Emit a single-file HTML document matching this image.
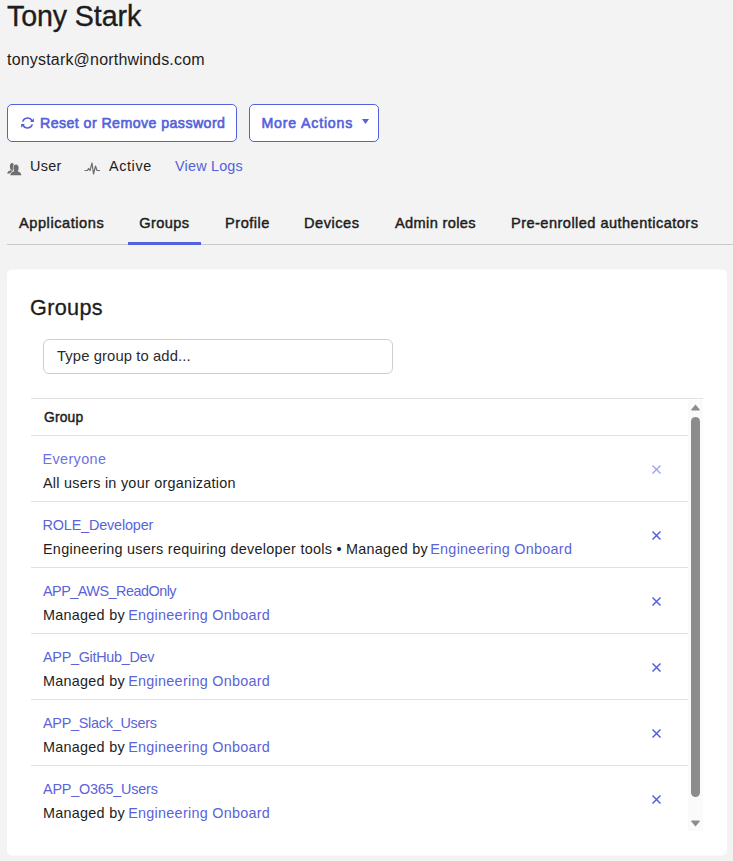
<!DOCTYPE html>
<html><head><meta charset="utf-8">
<style>
html,body{margin:0;padding:0}
body{width:733px;height:861px;overflow:hidden;background:#f3f3f3;position:relative;font-family:"Liberation Sans",sans-serif;color:#1d1d21}
.t{position:absolute;white-space:nowrap;line-height:20px}
.btn{position:absolute;box-sizing:border-box;border:1px solid #5361dc;border-radius:5px;background:#fff}
.pri{color:#5361dc}
.scroll .pri{color:#5a63d9}
.bold{font-weight:normal;-webkit-text-stroke:0.45px currentColor}
.btnt{-webkit-text-stroke:0.6px currentColor}
.tab{font-weight:normal;-webkit-text-stroke:0.45px #1d1d21;font-size:14.6px;color:#1d1d21}
.card{position:absolute;left:7px;top:269px;width:720px;height:586px;background:#fff;border-radius:5px;transform:translateY(0.5px)}
.input{position:absolute;left:43px;top:339px;width:350px;height:35px;box-sizing:border-box;border:1px solid #cecece;border-radius:6px;background:#fff}
.scroll{position:absolute;left:31px;top:398px;width:672px;height:433px;box-sizing:border-box;border-top:1px solid #e0e0e0;overflow:hidden}
.rows{position:absolute;left:0;top:0;width:657px}
.row{position:relative;height:65px;border-bottom:1px solid #e0e0e0}
.hdr{position:relative;height:36px;border-bottom:1px solid #e0e0e0}
.r1{position:absolute;left:12px;white-space:nowrap;font-size:14.4px;line-height:20px;top:13px;letter-spacing:0.1px}
.r2{position:absolute;left:12px;white-space:nowrap;font-size:14.4px;line-height:20px;top:36.5px;letter-spacing:0.27px}
.x{position:absolute;left:621px;top:28.5px;width:9px;height:9px}
</style></head><body>

<div class="t" style="left:7px;top:4px;font-size:28.6px;line-height:24px;letter-spacing:-0.1px;-webkit-text-stroke:0.35px #1d1d21">Tony Stark</div>
<div class="t" style="left:7px;top:50px;font-size:16px;letter-spacing:0.19px">tonystark@northwinds.com</div>

<div class="btn" style="left:7px;top:104px;width:230px;height:38px"></div>
<svg style="position:absolute;left:21px;top:117px" width="13" height="12" viewBox="0 0 13 12"><path d="M1.69 4.62A5 5 0 0 1 10.99 3.81M11.31 7.38A5 5 0 0 1 2.01 8.19" fill="none" stroke="#5361dc" stroke-width="1.6"/><path d="M12.9 1.3V5.1H9.1z M0.1 10.7V6.9H3.9z" fill="#5361dc"/></svg>
<div class="t pri bold btnt" style="left:40px;top:113px;font-size:14.2px;letter-spacing:0.43px">Reset or Remove password</div>

<div class="btn" style="left:249px;top:104px;width:130px;height:38px"></div>
<div class="t pri bold btnt" style="left:261.5px;top:113px;font-size:14.2px;letter-spacing:0.8px">More Actions</div>
<svg style="position:absolute;left:362px;top:119px" width="7" height="5" viewBox="0 0 7 5"><path d="M0 0H7L3.5 5z" fill="#5361dc"/></svg>

<svg style="position:absolute;left:7px;top:162px" width="15" height="14" viewBox="0 0 15 14"><ellipse cx="5" cy="4.5" rx="2.1" ry="3.6" fill="#6e6e6e"/><path d="M0 11.6Q0.4 9 3.5 8.2H6V11.6Z" fill="#6e6e6e"/><g fill="#f3f3f3" stroke="#f3f3f3" stroke-width="1.2"><path d="M3.3 13.2Q3.8 9.8 7.2 9.2H10.4Q13.8 9.8 14.4 13.2Z"/><ellipse cx="9" cy="5.9" rx="2.6" ry="3.5"/></g><g fill="#6e6e6e"><path d="M3.3 13.2Q3.8 9.8 7.2 9.2H10.4Q13.8 9.8 14.4 13.2Z"/><ellipse cx="9" cy="5.9" rx="2.6" ry="3.5"/><rect x="7.5" y="8" width="3" height="2"/></g></svg>
<div class="t" style="left:30px;top:156px;font-size:14.4px;letter-spacing:0.3px">User</div>

<svg style="position:absolute;left:84px;top:162px" width="17" height="13" viewBox="0 0 17 13"><path d="M0.5 8.5H3.5L4.5 6.5L6 8.5L8 1L9.5 12L11.5 4L13 8.5H16" fill="none" stroke="#6e6e6e" stroke-width="1.2" stroke-linejoin="round"/></svg>
<div class="t" style="left:109px;top:156px;font-size:14.4px;letter-spacing:0.6px">Active</div>
<div class="t pri" style="left:175px;top:156px;font-size:14.4px;letter-spacing:0.2px">View Logs</div>

<div class="t tab" style="left:19px;top:213px;letter-spacing:0.55px">Applications</div>
<div class="t tab" style="left:139.3px;top:213px;letter-spacing:0.4px">Groups</div>
<div class="t tab" style="left:225px;top:213px;letter-spacing:0.52px">Profile</div>
<div class="t tab" style="left:304px;top:213px;letter-spacing:0.52px">Devices</div>
<div class="t tab" style="left:395px;top:213px;letter-spacing:0.35px">Admin roles</div>
<div class="t tab" style="left:511px;top:213px;letter-spacing:0.45px">Pre-enrolled authenticators</div>
<div style="position:absolute;left:7px;top:244px;width:726px;height:1px;background:#cacaca"></div>
<div style="position:absolute;left:128px;top:242px;width:73px;height:3px;background:#5361dc"></div>

<div class="card"></div>
<div class="t" style="left:30px;top:297.5px;font-size:21.6px;letter-spacing:0.35px;-webkit-text-stroke:0.3px #1d1d21">Groups</div>
<div class="input"></div>
<div class="t" style="left:57px;top:346px;font-size:14.8px;letter-spacing:0.1px;color:#2b2b2f">Type group to add...</div>

<div class="scroll"><div class="rows">
  <div class="hdr"><div class="r1 bold" style="font-size:13.8px;top:9px;letter-spacing:0.2px;left:13px">Group</div></div>
  <div class="row"><div class="r1 pri" style="color:#6b74e0;letter-spacing:0.38px;left:11.5px">Everyone</div><div class="r2">All users in your organization</div>
    <svg class="x" viewBox="0 0 9 9"><path d="M0.5 0.5L8.5 8.5M8.5 0.5L0.5 8.5" stroke="#9ba1ee" stroke-width="1.3"/></svg></div>
  <div class="row"><div class="r1 pri" style="letter-spacing:-0.15px;left:11.5px">ROLE_Developer</div><div class="r2">Engineering users requiring developer tools • Managed by <span class="pri" style="margin-left:-2px;letter-spacing:0.27px">Engineering Onboard</span></div>
    <svg class="x" viewBox="0 0 9 9"><path d="M0.5 0.5L8.5 8.5M8.5 0.5L0.5 8.5" stroke="#5361dc" stroke-width="1.5"/></svg></div>
  <div class="row"><div class="r1 pri" style="letter-spacing:-0.5px">APP_AWS_ReadOnly</div><div class="r2">Managed by <span class="pri" style="margin-left:-1px">Engineering Onboard</span></div>
    <svg class="x" viewBox="0 0 9 9"><path d="M0.5 0.5L8.5 8.5M8.5 0.5L0.5 8.5" stroke="#5361dc" stroke-width="1.5"/></svg></div>
  <div class="row"><div class="r1 pri" style="letter-spacing:-0.28px">APP_GitHub_Dev</div><div class="r2">Managed by <span class="pri" style="margin-left:-1px">Engineering Onboard</span></div>
    <svg class="x" viewBox="0 0 9 9"><path d="M0.5 0.5L8.5 8.5M8.5 0.5L0.5 8.5" stroke="#5361dc" stroke-width="1.5"/></svg></div>
  <div class="row"><div class="r1 pri" style="letter-spacing:-0.26px">APP_Slack_Users</div><div class="r2">Managed by <span class="pri" style="margin-left:-1px">Engineering Onboard</span></div>
    <svg class="x" viewBox="0 0 9 9"><path d="M0.5 0.5L8.5 8.5M8.5 0.5L0.5 8.5" stroke="#5361dc" stroke-width="1.5"/></svg></div>
  <div class="row"><div class="r1 pri" style="letter-spacing:-0.21px">APP_O365_Users</div><div class="r2">Managed by <span class="pri" style="margin-left:-1px">Engineering Onboard</span></div>
    <svg class="x" viewBox="0 0 9 9"><path d="M0.5 0.5L8.5 8.5M8.5 0.5L0.5 8.5" stroke="#5361dc" stroke-width="1.5"/></svg></div>
  <div style="height:25px"></div>
</div>
<div style="position:absolute;left:657px;top:1px;width:15px;height:432px;background:#fafafa"></div>
<svg style="position:absolute;left:657px;top:1px" width="15" height="432" viewBox="0 0 15 432">
<path d="M7.5 4.4L11.7 9.6Q12.3 10.6 11.1 10.6H3.9Q2.7 10.6 3.3 9.6z" fill="#8c8c8c"/>
<rect x="3" y="17" width="9" height="380" rx="4.5" fill="#8c8c8c"/>
<path d="M7.5 426.6L11.7 421.5Q12.3 420.5 11.1 420.5H3.9Q2.7 420.5 3.3 421.5z" fill="#8c8c8c"/>
</svg>
</div>

</body></html>
